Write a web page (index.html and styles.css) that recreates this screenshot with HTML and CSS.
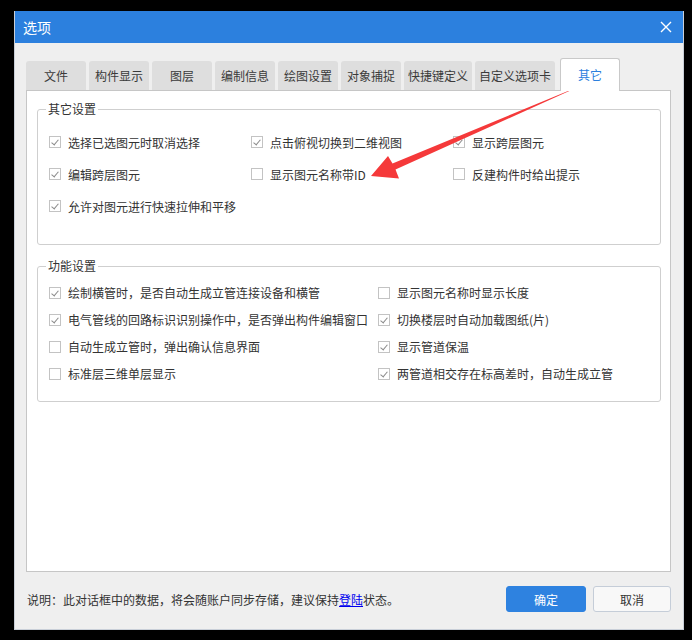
FILE: index.html
```html
<!DOCTYPE html>
<html lang="zh-CN">
<head>
<meta charset="utf-8">
<title>选项</title>
<link rel="stylesheet" href="styles.css">
</head>
<body>
<div class="dialog">
  <div class="titlebar">
    <span class="title">选项</span>
    <svg class="close" width="12" height="12" viewBox="0 0 12 12"><path d="M1 1 L11 11 M11 1 L1 11" stroke="#fff" stroke-width="1.4" fill="none"/></svg>
  </div>
  <div class="body">
    <div class="tabs">
      <div class="tab">文件</div>
      <div class="tab">构件显示</div>
      <div class="tab">图层</div>
      <div class="tab">编制信息</div>
      <div class="tab">绘图设置</div>
      <div class="tab">对象捕捉</div>
      <div class="tab">快捷键定义</div>
      <div class="tab">自定义选项卡</div>
      <div class="tab active">其它</div>
    </div>
    <div class="panel">
      <fieldset class="group group-other">
        <legend>其它设置</legend>
        <div class="grid grid3">
          <label class="item"><span class="cb on"></span>选择已选图元时取消选择</label>
          <label class="item"><span class="cb on"></span>点击俯视切换到二维视图</label>
          <label class="item"><span class="cb on"></span>显示跨层图元</label>
          <label class="item"><span class="cb on"></span>编辑跨层图元</label>
          <label class="item"><span class="cb"></span>显示图元名称带ID</label>
          <label class="item"><span class="cb"></span>反建构件时给出提示</label>
          <label class="item"><span class="cb on"></span>允许对图元进行快速拉伸和平移</label>
        </div>
      </fieldset>
      <fieldset class="group group-func">
        <legend>功能设置</legend>
        <div class="grid grid2">
          <label class="item"><span class="cb on"></span>绘制横管时，是否自动生成立管连接设备和横管</label>
          <label class="item"><span class="cb"></span>显示图元名称时显示长度</label>
          <label class="item"><span class="cb on"></span>电气管线的回路标识识别操作中，是否弹出构件编辑窗口</label>
          <label class="item"><span class="cb on"></span>切换楼层时自动加载图纸(片)</label>
          <label class="item"><span class="cb"></span>自动生成立管时，弹出确认信息界面</label>
          <label class="item"><span class="cb on"></span>显示管道保温</label>
          <label class="item"><span class="cb"></span>标准层三维单层显示</label>
          <label class="item"><span class="cb on"></span>两管道相交存在标高差时，自动生成立管</label>
        </div>
      </fieldset>
    </div>
    <div class="footer">
      <div class="note">说明：此对话框中的数据，将会随账户同步存储，建议保持<a class="link" href="#">登陆</a>状态。</div>
      <div class="buttons">
        <button class="btn primary">确定</button>
        <button class="btn">取消</button>
      </div>
    </div>
  </div>
</div>
<svg class="arrow" width="692" height="640" viewBox="0 0 692 640">
  <polygon points="371,176 388,156 392.5,163.5 582.5,85 395.5,169.5 399,178.5" fill="#f5393a"/>
</svg>
</body>
</html>
```
FILE: styles.css
```css
* { box-sizing: border-box; }
html, body { margin: 0; padding: 0; }
body {
  background: #000;
  width: 692px;
  height: 640px;
  position: relative;
  overflow: hidden;
  font-family: "Noto Sans CJK SC", "Noto Sans", sans-serif;
  font-size: 12px;
  color: #333;
}
.dialog {
  position: relative;
  width: 670px;
  height: 619px;
  margin: 11px 0 0 14px;
  background: #efefef;
  border: 1px solid #c9cfd8;
  border-top: none;
  display: flex;
  flex-direction: column;
}
.titlebar {
  height: 32px;
  background: #2c80de;
  display: flex;
  align-items: center;
  justify-content: space-between;
  padding: 0 11px 0 8px;
  color: #fff;
  font-size: 14px;
  flex: none;
}
.title { line-height: 1; }
.close { display: block; }
.body {
  flex: 1;
  display: flex;
  flex-direction: column;
  padding: 15px 12px 0 11px;
}
.tabs {
  display: flex;
  align-items: flex-end;
  gap: 3px;
  height: 32px;
  flex: none;
}
.tab {
  height: 29px;
  min-width: 60px;
  padding: 0 4px;
  background: #dedede;
  border-radius: 3px 3px 0 0;
  display: flex;
  align-items: center;
  justify-content: center;
  color: #3a3a3a;
  white-space: nowrap;
}
.tab.active {
  position: relative;
  z-index: 1;
  height: 33px;
  margin-bottom: -1px;
  margin-left: 2px;
  background: #fff;
  border: 1px solid #c9c9c9;
  border-bottom: none;
  color: #2c80de;
  padding-bottom: 2px;
}
.panel {
  height: 482px;
  background: #fff;
  border: 1px solid #c6c6c6;
  padding: 0 9px 0 10px;
  flex: none;
}
.group {
  margin: 0;
  border: 1px solid #cfcfcf;
  border-radius: 3px;
  padding: 0 8px 0 11px;
  min-width: 0;
}
.group legend {
  padding: 0 2px;
  margin-left: -3px;
  line-height: 18px;
  color: #333;
}
.group-other { margin-top: 9px; padding-top: 8px; padding-bottom: 22px; }
.group-func { margin-top: 12px; padding-top: 4px; padding-bottom: 14px; }
.grid { display: grid; }
.grid3 { grid-template-columns: 202px 202px 1fr; grid-auto-rows: 32px; }
.grid2 { grid-template-columns: 329px 1fr; grid-auto-rows: 27px; }
.item {
  display: flex;
  align-items: center;
  gap: 7px;
  white-space: nowrap;
  color: #333;
}
.cb {
  width: 12px;
  height: 12px;
  border: 1px solid #c3c3c3;
  background: #fff;
  flex: none;
  position: relative;
}
.cb.on::after {
  content: "";
  position: absolute;
  left: 3px;
  top: 1px;
  width: 3px;
  height: 6px;
  border-right: 1px solid #8a8a8a;
  border-bottom: 1px solid #8a8a8a;
  transform: rotate(40deg);
}
.footer {
  flex: 1;
  display: flex;
  align-items: center;
  justify-content: space-between;
  padding-bottom: 3px;
}
.note { color: #333; padding-left: 1px; }
.link { color: #0000ee; text-decoration: underline; }
.buttons { display: flex; gap: 7px; }
.btn {
  width: 78px;
  height: 26px;
  border: 1px solid #c5cdd8;
  border-radius: 3px;
  background: #f8f8f8;
  font-family: inherit;
  font-size: 12px;
  color: #333;
  padding: 0;
}
.btn.primary {
  width: 80px;
  background: #2e82e0;
  border-color: #2e82e0;
  color: #fff;
}
.arrow {
  position: absolute;
  left: 0;
  top: 0;
  pointer-events: none;
}
```
